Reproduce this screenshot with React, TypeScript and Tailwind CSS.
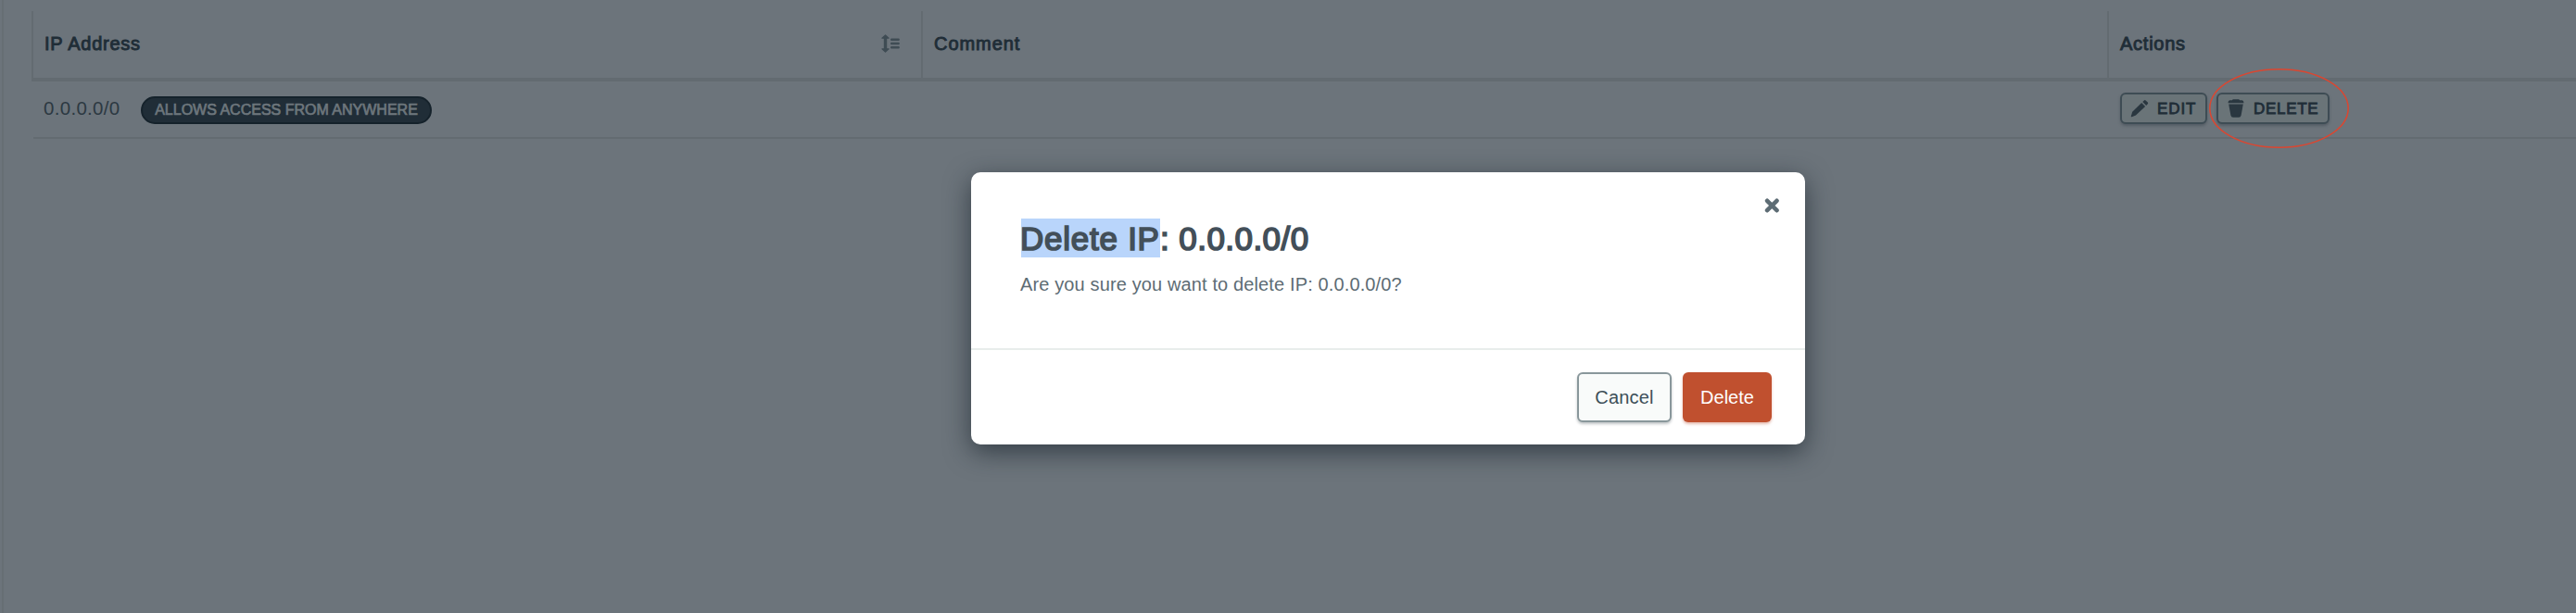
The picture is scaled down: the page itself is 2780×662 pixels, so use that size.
import type { ReactNode } from "react";

function SortIcon() {
  return (
    <svg className="h-5 w-5 shrink-0 fill-[#3f4c54]" viewBox="0 0 20 20">
      <path d="M2.8 4H6.2V16H2.8Z" />
      <path
        d="M4.5 0.9 8.1 4.2H0.9ZM4.5 19.1 8.1 15.8H0.9Z"
        className="stroke-[#3f4c54]"
        strokeWidth="1.2"
        strokeLinejoin="round"
      />
      <rect x="10" y="4.5" width="9.8" height="2.6" rx="1.1" />
      <rect x="10" y="8.7" width="9.8" height="2.6" rx="1.1" />
      <rect x="10" y="12.9" width="9.8" height="2.6" rx="1.1" />
    </svg>
  );
}

function PencilIcon() {
  return (
    <svg className="h-5 w-5 shrink-0 fill-[#2a3740]" viewBox="0 0 20 20">
      <path d="M14.9 1.4a1.2 1.2 0 0 1 1.7 0l2.2 2.2a1.2 1.2 0 0 1 0 1.7l-1.6 1.6-3.9-3.9Z" />
      <path d="M12.2 4.1 16.1 8 6 17.4 1.6 19.3Q0.6 19.6 0.8 18.6L2.2 13.8Z" />
    </svg>
  );
}

function TrashIcon() {
  return (
    <svg className="h-5 w-[18px] shrink-0 fill-[#2a3740]" viewBox="0 0 18 20">
      <path d="M5 1.2Q5.2 0.2 6.2 0.2H11.8Q12.8 0.2 13 1.2H15.6Q17.4 1.4 17.4 3.4V4.2H0.6V3.4Q0.6 1.4 2.4 1.2Z" />
      <path d="M1.2 5.4H16.8L14.6 17.6Q14.2 19.8 12 19.8H6Q3.8 19.8 3.4 17.6Z" />
    </svg>
  );
}

function CloseIcon() {
  return (
    <svg className="h-4 w-4 stroke-[#5d6c74]" viewBox="0 0 16 16" strokeWidth="4.6" strokeLinecap="round">
      <path d="M3.1 2.8 13.5 13.2M13.5 2.8 3.1 13.2" />
    </svg>
  );
}

function RowButton({ icon, label, className }: { icon: ReactNode; label: string; className: string }) {
  return (
    <button
      className={`flex h-[34px] items-center rounded-[6px] border-2 border-[#3e4c54] bg-[#6a7478] text-[17px] leading-none text-[#202d37] shadow-[0_2px_3px_rgba(40,50,60,0.35)] [-webkit-text-stroke:0.8px_#202d37] ${className}`}
    >
      {icon}
      <span>{label}</span>
    </button>
  );
}

function HeaderCell({ children, className }: { children: ReactNode; className: string }) {
  return (
    <div
      className={`flex h-[72px] items-center border-l-2 border-[#636b71] pb-[3px] pl-3 text-[20px] leading-none text-[#202d37] [-webkit-text-stroke:0.9px_#202d37] ${className}`}
    >
      {children}
    </div>
  );
}

function AccessTable() {
  return (
    <div className="min-h-[662px] w-full border-l-2 border-[#666e74] pt-3 pl-[30px]">
      <div className="flex border-b-4 border-[#636b71]">
        <HeaderCell className="w-[960px] justify-between pr-[23px] tracking-[0.75px]">
          <span>IP Address</span>
          <SortIcon />
        </HeaderCell>
        <HeaderCell className="w-[1280px] tracking-[0.95px]">Comment</HeaderCell>
        <HeaderCell className="grow tracking-[0.75px]">Actions</HeaderCell>
      </div>
      <div className="ml-[2px] flex h-[62px] border-b-2 border-[#636b71]">
        <div className="flex w-[960px] items-start pl-[11px]">
          <span className="mt-[18px] w-[105px] text-[20.5px] leading-[22px] tracking-[0.3px] text-[#2c3942]">0.0.0.0/0</span>
          <span className="mt-4 flex h-[30px] w-[314px] items-center justify-center rounded-full border-2 border-[#15222b] bg-[#202d37] text-[16px] leading-none whitespace-nowrap text-[#6d767c] [-webkit-text-stroke:0.7px_#6d767c]">
            ALLOWS ACCESS FROM ANYWHERE
          </span>
        </div>
        <div className="w-[1280px]" />
        <div className="relative flex items-start gap-[10px] pt-3 pl-3">
          <RowButton className="w-[94px] gap-[9px] pl-[9px] tracking-[0.9px]" icon={<PencilIcon />} label="EDIT" />
          <RowButton className="w-[122px] gap-[10px] pl-[10px] tracking-[0.7px]" icon={<TrashIcon />} label="DELETE" />
          <svg className="absolute top-[-15px] left-[106px] h-[88px] w-[154px]" viewBox="0 0 154 88">
            <ellipse cx="77.5" cy="44" rx="74.7" ry="42.3" fill="none" stroke="#dc4630" strokeWidth="1.5" />
          </svg>
        </div>
      </div>
    </div>
  );
}

function DeleteDialog() {
  return (
    <div className="flex h-[294px] w-[900px] flex-col rounded-[10px] bg-white shadow-[0_8px_28px_rgba(25,35,44,0.68)]">
      <div className="flex grow items-start justify-between border-b-2 border-[#e8edeb] pl-[54px]">
        <div className="pt-[50px]">
          <h1 className="flex text-[35px] leading-[42px] text-[#434f59] [-webkit-text-stroke:1.7px_#434f59]">
            <span className="h-[42px] w-[150px] bg-[#b9d5fb] pt-px -indent-px leading-[42px] tracking-[0.75px] whitespace-nowrap">
              Delete IP
            </span>
            <span className="pt-px tracking-[0.45px] whitespace-pre">: 0.0.0.0/0</span>
          </h1>
          <p className="mt-4 -ml-px text-[20px] leading-6 tracking-[0.13px] text-[#5d6c74]">
            Are you sure you want to delete IP: 0.0.0.0/0?
          </p>
        </div>
        <button className="mt-7 mr-[28px]" aria-label="Close">
          <CloseIcon />
        </button>
      </div>
      <div className="flex h-[102px] items-start justify-end gap-3 pt-6 pr-9 text-[20px] leading-none">
        <button className="h-[54px] w-[102px] rounded-[6px] border-2 border-[#89979b] bg-[#f9fbfa] tracking-[0.2px] text-[#3d4f58] shadow-[0_2px_3px_rgba(6,22,33,0.25)]">
          Cancel
        </button>
        <button className="h-[54px] w-24 rounded-[6px] bg-[#c0502f] text-white shadow-[0_2px_3px_rgba(180,60,30,0.35)]">
          Delete
        </button>
      </div>
    </div>
  );
}

export default function App() {
  return (
    <div className="relative h-[662px] w-full overflow-hidden bg-[#6c747b] pl-[2px] font-['Liberation_Sans',Arial,sans-serif]">
      <AccessTable />
      <div className="absolute inset-0 flex items-start justify-center pt-[186px] pl-[216px]">
        <DeleteDialog />
      </div>
    </div>
  );
}
